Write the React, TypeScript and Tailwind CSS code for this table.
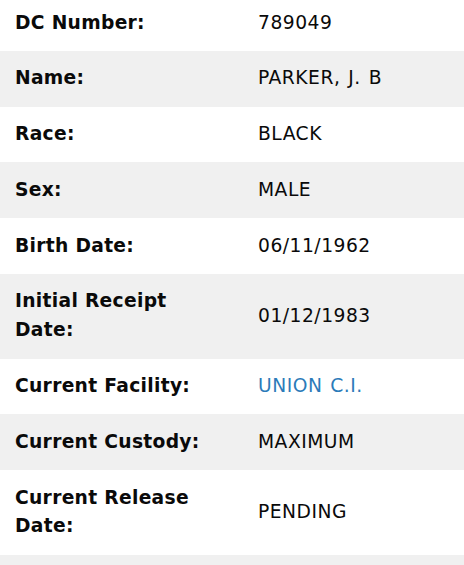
import React from "react";

const rows: { label: string; value: string; link?: boolean }[] = [
  { label: "DC Number:", value: "789049" },
  { label: "Name:", value: "PARKER, J. B" },
  { label: "Race:", value: "BLACK" },
  { label: "Sex:", value: "MALE" },
  { label: "Birth Date:", value: "06/11/1962" },
  { label: "Initial Receipt Date:", value: "01/12/1983" },
  { label: "Current Facility:", value: "UNION C.I.", link: true },
  { label: "Current Custody:", value: "MAXIMUM" },
  { label: "Current Release Date:", value: "PENDING" },
  { label: "", value: "" },
];

export default function App() {
  return (
    <div
      className="w-[464px] h-[565px] overflow-hidden bg-white text-[18.7px] leading-[28.8px] text-[#0a0a0a]"
      style={{ fontFamily: 'Verdana, "DejaVu Sans", sans-serif' }}
    >
      <div className="-mt-[5px] flex flex-col">
        {rows.map((r, i) => (
          <div
            key={i}
            className={`grid grid-cols-[243px_1fr] items-center ${i % 2 === 1 ? "bg-[#f0f0f0]" : "bg-white"}`}
          >
            <div className="pl-[15px] pr-[30px] py-[13.5px] font-bold tracking-[0.3px]">{r.label || "\u00a0"}</div>
            <div className="px-[15px] py-[13.5px] tracking-[0.5px] [word-spacing:1.5px]">
              {r.link ? <span className="text-[#2b7bb9]">{r.value}</span> : r.value}
            </div>
          </div>
        ))}
      </div>
    </div>
  );
}
